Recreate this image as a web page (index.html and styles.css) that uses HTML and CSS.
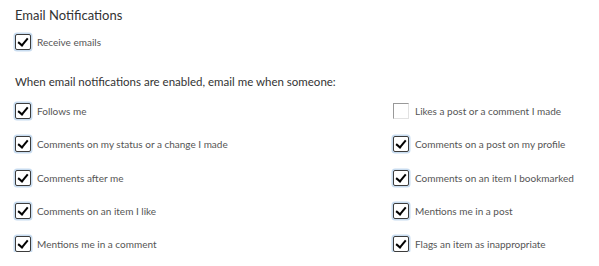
FILE: index.html
```html
<!DOCTYPE html>
<html>
<head>
<meta charset="utf-8">
<link rel="stylesheet" href="styles.css">
</head>
<body>
<div class="panel">
  <h2 class="title">Email Notifications</h2>
  <label class="check master"><span class="box on"></span><span class="lbl">Receive emails</span></label>
  <p class="intro">When email notifications are enabled, email me when someone:</p>
  <div class="grid">
    <label class="check"><span class="box on"></span><span class="lbl">Follows me</span></label>
    <label class="check"><span class="box"></span><span class="lbl">Likes a post or a comment I made</span></label>
    <label class="check"><span class="box on"></span><span class="lbl">Comments on my status or a change I made</span></label>
    <label class="check"><span class="box on"></span><span class="lbl">Comments on a post on my profile</span></label>
    <label class="check"><span class="box on"></span><span class="lbl">Comments after me</span></label>
    <label class="check"><span class="box on"></span><span class="lbl">Comments on an item I bookmarked</span></label>
    <label class="check"><span class="box on"></span><span class="lbl">Comments on an item I like</span></label>
    <label class="check"><span class="box on"></span><span class="lbl">Mentions me in a post</span></label>
    <label class="check"><span class="box on"></span><span class="lbl">Mentions me in a comment</span></label>
    <label class="check"><span class="box on"></span><span class="lbl">Flags an item as inappropriate</span></label>
  </div>
</div>
</body>
</html>
```

FILE: styles.css
```css
html, body {
  margin: 0;
  padding: 0;
  background: #fff;
}
body {
  font-family: Lato, "Open Sans", sans-serif;
  color: #333;
}
.panel {
  padding: 6px 0 0 15px;
  width: 584px;
}
.title {
  margin: 0;
  font-size: 13px;
  font-weight: 400;
  line-height: 18px;
  color: #333;
}
.check {
  display: flex;
  align-items: center;
  gap: 6px;
  height: 16px;
}
.master {
  margin-top: 10px;
}
.lbl {
  font-size: 10px;
  color: #555;
  white-space: nowrap;
}
.intro {
  margin: 24px 0 0;
  font-size: 11.5px;
  line-height: 16px;
  color: #333;
}
.grid {
  margin-top: 13px;
  display: grid;
  grid-template-columns: 378px 1fr;
  grid-auto-rows: 16px;
  row-gap: 17.25px;
}
.box {
  position: relative;
  flex: none;
  width: 16px;
  height: 16px;
  box-sizing: border-box;
  background: #fff;
  border: 1px solid #999;
  border-right-color: #e2e2e2;
  border-bottom-color: #e2e2e2;
}
.box.on {
  border: 1.5px solid #3c3c3c;
  border-radius: 2px;
  box-shadow: 0 0 0 1.5px #c8dcf0;
}
.box.on::after {
  content: "";
  position: absolute;
  left: 3.5px;
  top: 1px;
  width: 4px;
  height: 8px;
  border: solid #000;
  border-width: 0 2.5px 2.5px 0;
  transform: rotate(40deg);
}
```
